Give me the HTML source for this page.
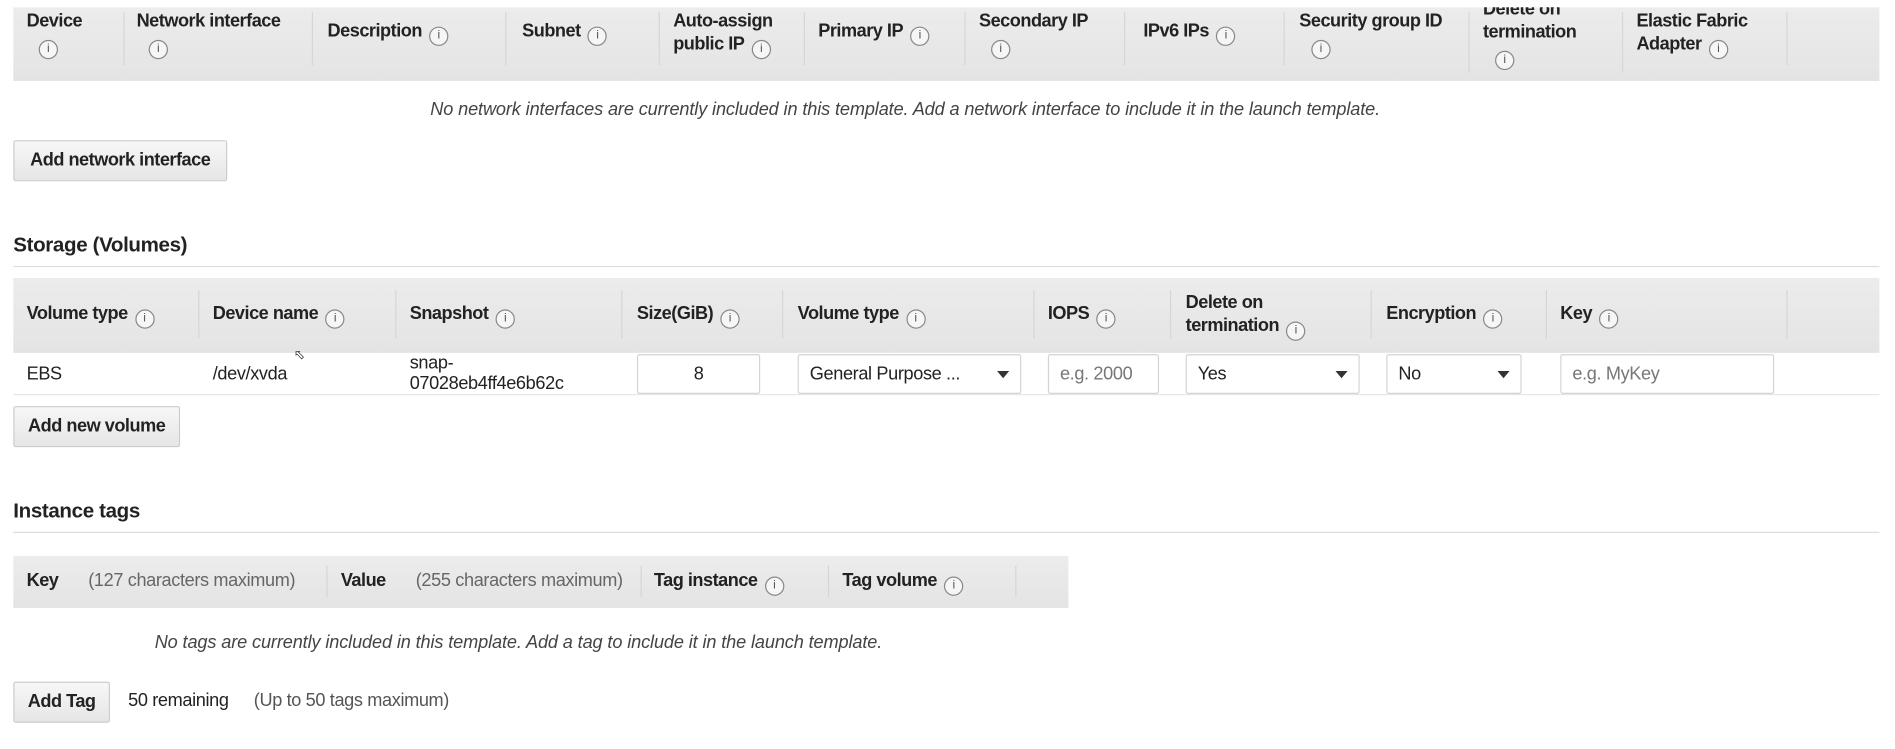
<!DOCTYPE html>
<html><head><meta charset="utf-8"><style>
html,body{margin:0;padding:0;background:#fff;overflow:hidden}
body{width:1895px;height:749px}
#w{position:absolute;left:0;top:0;width:1568px;height:620px;transform:scale(1.2086);transform-origin:0 0;font-family:"Liberation Sans",Arial,sans-serif;color:#222;font-size:15px}
.a{position:absolute;white-space:nowrap}
.b{font-weight:bold;letter-spacing:-0.4px}
.hd{position:absolute;background:linear-gradient(#ececec,#e4e4e4);}
.sep{position:absolute;width:1px;background:#d6d6d6}
.i{display:inline-block;width:16px;height:16px;border:1px solid #888;border-radius:50%;box-sizing:border-box;font-size:10px;font-weight:normal;text-align:center;line-height:14px;color:#555;vertical-align:-2px;margin-left:6px;background:#f6f6f6;letter-spacing:0}
.btn{position:absolute;background:linear-gradient(#f7f7f7,#e6e6e6);border:1px solid #ccc;border-radius:2px;box-sizing:border-box;font-weight:bold;letter-spacing:-0.4px;text-align:center;font-size:15px}
.it{font-style:italic;color:#444;letter-spacing:-0.1px}
.inp{position:absolute;background:#fff;border:1px solid #d4d4d4;border-radius:2px;box-sizing:border-box;height:33px;line-height:31px;padding-left:9px;font-size:15px;letter-spacing:-0.3px}
.ph{color:#777}
.arr{position:absolute;right:9px;top:13px;width:0;height:0;border-left:5px solid transparent;border-right:5px solid transparent;border-top:6px solid #333}
.line{position:absolute;height:1px;background:#ddd;left:11px;width:1544px}
.h2{font-weight:bold;font-size:17px;letter-spacing:-0.3px}
.g{color:#666;letter-spacing:-0.3px}
</style></head><body><div id="w">
<div class="hd" style="left:11px;top:6px;width:1544px;height:61px"></div>
<div class="sep" style="left:102px;top:10px;height:44px"></div>
<div class="sep" style="left:258px;top:10px;height:44px"></div>
<div class="sep" style="left:418px;top:10px;height:44px"></div>
<div class="sep" style="left:545px;top:10px;height:44px"></div>
<div class="sep" style="left:665px;top:10px;height:44px"></div>
<div class="sep" style="left:798px;top:10px;height:44px"></div>
<div class="sep" style="left:930px;top:10px;height:44px"></div>
<div class="sep" style="left:1062px;top:10px;height:44px"></div>
<div class="sep" style="left:1215px;top:10px;height:50px"></div>
<div class="sep" style="left:1342px;top:10px;height:50px"></div>
<div class="sep" style="left:1478px;top:10px;height:44px"></div>
<div class="a b" style="left:22px;top:8px;line-height:19px">Device<br><span class="i" style="margin-left:10px">i</span></div>
<div class="a b" style="left:113px;top:8px;line-height:19px">Network interface<br><span class="i" style="margin-left:10px">i</span></div>
<div class="a b" style="left:271px;top:17px">Description<span class="i">i</span></div>
<div class="a b" style="left:432px;top:17px">Subnet<span class="i">i</span></div>
<div class="a b" style="left:557px;top:8px;line-height:19px">Auto-assign<br>public IP<span class="i">i</span></div>
<div class="a b" style="left:677px;top:17px">Primary IP<span class="i">i</span></div>
<div class="a b" style="left:810px;top:8px;line-height:19px">Secondary IP<br><span class="i" style="margin-left:10px">i</span></div>
<div class="a b" style="left:946px;top:17px">IPv6 IPs<span class="i">i</span></div>
<div class="a b" style="left:1075px;top:8px;line-height:19px">Security group ID<br><span class="i" style="margin-left:10px">i</span></div>
<div class="a b" style="left:1227px;top:-2px;line-height:19px">Delete on<br>termination<br><span class="i" style="margin-left:10px">i</span></div>
<div class="a b" style="left:1354px;top:8px;line-height:19px">Elastic Fabric<br>Adapter<span class="i">i</span></div>
<div style="position:absolute;left:0;top:0;width:1568px;height:6px;background:#fff"></div>
<div class="a it" style="left:356px;top:82px">No network interfaces are currently included in this template. Add a network interface to include it in the launch template.</div>
<div class="btn" style="left:11px;top:116px;width:177px;height:34px;line-height:32px">Add network interface</div>
<div class="a h2" style="left:11px;top:193px">Storage (Volumes)</div>
<div class="line" style="top:220px"></div>
<div class="hd" style="left:11px;top:230px;width:1544px;height:62px"></div>
<div class="sep" style="left:164px;top:240px;height:40px"></div>
<div class="sep" style="left:327px;top:240px;height:40px"></div>
<div class="sep" style="left:514px;top:240px;height:40px"></div>
<div class="sep" style="left:647px;top:240px;height:40px"></div>
<div class="sep" style="left:855px;top:240px;height:40px"></div>
<div class="sep" style="left:968px;top:240px;height:40px"></div>
<div class="sep" style="left:1134px;top:240px;height:40px"></div>
<div class="sep" style="left:1279px;top:240px;height:40px"></div>
<div class="sep" style="left:1478px;top:240px;height:40px"></div>
<div class="a b" style="left:22px;top:251px">Volume type<span class="i">i</span></div>
<div class="a b" style="left:176px;top:251px">Device name<span class="i">i</span></div>
<div class="a b" style="left:339px;top:251px">Snapshot<span class="i">i</span></div>
<div class="a b" style="left:527px;top:251px">Size(GiB)<span class="i">i</span></div>
<div class="a b" style="left:660px;top:251px">Volume type<span class="i">i</span></div>
<div class="a b" style="left:867px;top:251px">IOPS<span class="i">i</span></div>
<div class="a b" style="left:981px;top:241px;line-height:19px">Delete on<br>termination<span class="i">i</span></div>
<div class="a b" style="left:1147px;top:251px">Encryption<span class="i">i</span></div>
<div class="a b" style="left:1291px;top:251px">Key<span class="i">i</span></div>
<div class="line" style="top:326px;background:#e6e6e6"></div>
<div class="a" style="left:22px;top:301px;letter-spacing:-0.3px">EBS</div>
<div class="a" style="left:176px;top:301px;letter-spacing:-0.3px">/dev/xvda</div>
<div class="a" style="left:339px;top:292px;line-height:17px;letter-spacing:-0.3px">snap-<br>07028eb4ff4e6b62c</div>
<div class="inp" style="left:527px;top:293px;width:102px;text-align:center;padding:0">8</div>
<div class="inp" style="left:660px;top:293px;width:185px">General Purpose ...<span class="arr"></span></div>
<div class="inp ph" style="left:867px;top:293px;width:92px">e.g. 2000</div>
<div class="inp" style="left:981px;top:293px;width:144px">Yes<span class="arr"></span></div>
<div class="inp" style="left:1147px;top:293px;width:112px">No<span class="arr"></span></div>
<div class="inp ph" style="left:1291px;top:293px;width:177px">e.g. MyKey</div>
<div class="btn" style="left:11px;top:336px;width:138px;height:34px;line-height:32px">Add new volume</div>
<div class="a h2" style="left:11px;top:413px">Instance tags</div>
<div class="line" style="top:440px"></div>
<div class="hd" style="left:11px;top:460px;width:873px;height:43px"></div>
<div class="sep" style="left:270px;top:468px;height:26px"></div>
<div class="sep" style="left:530px;top:468px;height:26px"></div>
<div class="sep" style="left:685px;top:468px;height:26px"></div>
<div class="sep" style="left:840px;top:468px;height:26px"></div>
<div class="a b" style="left:22px;top:472px">Key</div>
<div class="a g" style="left:73px;top:472px">(127 characters maximum)</div>
<div class="a b" style="left:282px;top:472px">Value</div>
<div class="a g" style="left:344px;top:472px">(255 characters maximum)</div>
<div class="a b" style="left:541px;top:472px">Tag instance<span class="i">i</span></div>
<div class="a b" style="left:697px;top:472px">Tag volume<span class="i">i</span></div>
<div class="a it" style="left:128px;top:523px">No tags are currently included in this template. Add a tag to include it in the launch template.</div>
<div class="btn" style="left:11px;top:564px;width:80px;height:34px;line-height:32px">Add Tag</div>
<div class="a" style="left:106px;top:571px;letter-spacing:-0.3px">50 remaining</div>
<div class="a g" style="left:210px;top:571px;color:#555">(Up to 50 tags maximum)</div>
<div class="a" style="left:243px;top:287px;font-size:11px">&#11009;</div>
</div></body></html>
